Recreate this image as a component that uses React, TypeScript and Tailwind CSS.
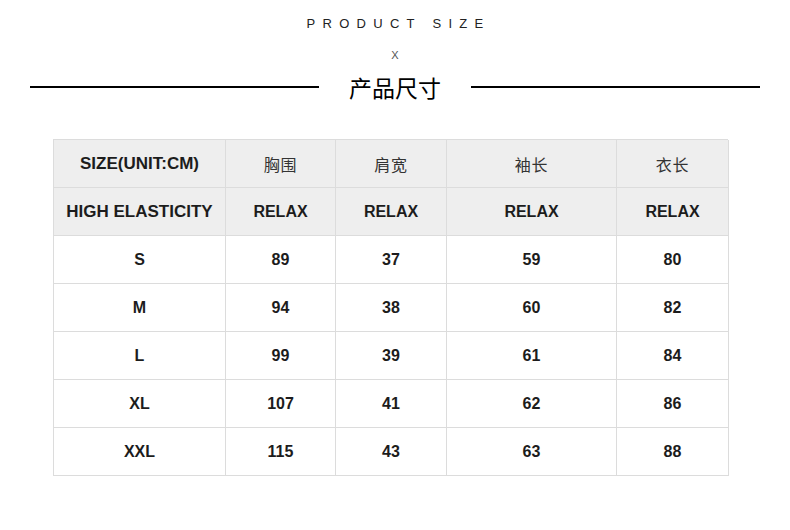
const rows = [
  ["S", "89", "37", "59", "80"],
  ["M", "94", "38", "60", "82"],
  ["L", "99", "39", "61", "84"],
  ["XL", "107", "41", "62", "86"],
  ["XXL", "115", "43", "63", "88"],
];

const cnHeads = ["胸围", "肩宽", "袖长", "衣长"];

const cell =
  "flex h-[48px] items-center justify-center border-r border-b border-[#dcdcdc]";

export default function App() {
  return (
    <div
      className="h-[530px] w-[790px] bg-white text-[#1c1c1c]"
      style={{ fontFamily: "'Liberation Sans', Arial, sans-serif" }}
    >
      <div className="flex flex-col items-center pt-[16px]">
        <div className="pl-[0.55em] text-[13px] leading-[16px] tracking-[0.56em] text-[#222]">
          PRODUCT SIZE
        </div>
        <div className="mt-[17px] text-[11px] leading-[12px] text-[#555]">X</div>
      </div>

      <div className="mt-[10px] flex items-center px-[30px]">
        <div className="h-[2px] flex-1 bg-black" />
        <div className="w-[152px] text-center font-['Noto_Sans_CJK_SC',sans-serif] text-[23px] leading-[32px] text-black">
          产品尺寸
        </div>
        <div className="h-[2px] flex-1 bg-black" />
      </div>

      <div className="ml-[53px] mt-[36px] grid w-[675px] grid-cols-[172px_110px_111px_170px_112px] border-t border-l border-[#dcdcdc] text-[16px] font-bold">
        <div className={`${cell} bg-[#eeeeee] text-[17px]`}>SIZE(UNIT:CM)</div>
        {cnHeads.map((h) => (
          <div
            key={h}
            className={`${cell} bg-[#eeeeee] font-['Noto_Sans_CJK_SC',serif] text-[16px] font-normal tracking-[0.05em] text-[#333]`}
          >
            {h}
          </div>
        ))}
        <div className={`${cell} bg-[#eeeeee] text-[17px]`}>HIGH ELASTICITY</div>
        {cnHeads.map((h) => (
          <div key={h + "r"} className={`${cell} bg-[#eeeeee]`}>
            RELAX
          </div>
        ))}
        {rows.map((r) =>
          r.map((v, i) => (
            <div key={r[0] + i} className={cell}>
              {v}
            </div>
          ))
        )}
      </div>
    </div>
  );
}
